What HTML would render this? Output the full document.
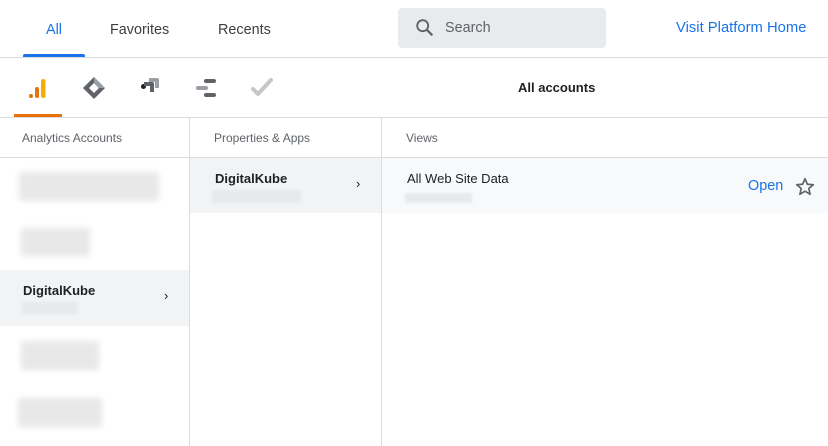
<!DOCTYPE html>
<html><head><style>
*{margin:0;padding:0;box-sizing:border-box}
body{width:828px;height:446px;background:#fff;font-family:"Liberation Sans",Arial,sans-serif;position:relative;overflow:hidden;color:#202124}
.a{position:absolute}
.hl{position:absolute;left:0;width:828px;height:1px;background:#dadce0}
.vl{position:absolute;width:1px;background:#dadce0}
.blur{position:absolute;background:#e8e8e8;filter:blur(3px)}
.bar{position:absolute;background:#e8e9eb;filter:blur(1px)}
.t{position:absolute;font-size:14.4px}
.h{position:absolute;font-size:12px;color:#5f6368}
</style></head><body>
<div class="t" style="left:46px;top:22px;color:#1a73e8">All</div>
<div class="a" style="left:23px;top:54px;width:62px;height:3px;background:#1a73e8;border-radius:2px 2px 0 0"></div>
<div class="t" style="left:110px;top:22px;color:#3c4043">Favorites</div>
<div class="t" style="left:218px;top:22px;color:#3c4043">Recents</div>
<div class="a" style="left:398px;top:8px;width:208px;height:40px;background:#e8eaed;border-radius:4px"></div>
<svg class="a" style="left:414px;top:17px" width="22" height="22" viewBox="0 0 24 24"><circle cx="9.5" cy="9.5" r="6" fill="none" stroke="#5f6368" stroke-width="2"/><path d="M14 14l6 6" stroke="#5f6368" stroke-width="2.4"/></svg>
<div class="t" style="left:445px;top:20px;color:#5f6368">Search</div>
<div class="t" style="left:676px;top:20px;color:#1a73e8;font-size:14.8px">Visit Platform Home</div>
<div class="hl" style="top:57px"></div>
<svg class="a" style="left:26px;top:76px" width="24" height="24" viewBox="0 0 24 24"><circle cx="5" cy="20" r="2" fill="#e37400"/><rect x="9" y="11" width="4" height="11" rx="2" fill="#e8710a"/><rect x="15" y="3" width="4.5" height="19" rx="2.2" fill="#f9ab00"/></svg>
<div class="a" style="left:14px;top:114px;width:48px;height:3px;background:#e8710a"></div>
<svg class="a" style="left:82px;top:76px" width="24" height="24" viewBox="0 0 24 24"><path d="M12 1L23 12 12 23 1 12Z" fill="#5f6368"/><path d="M12 7L17 12 12 17 7 12Z" fill="#fff"/><path d="M12 1L23 12 17.5 12 12 6.5Z" fill="#9aa0a6"/></svg>
<svg class="a" style="left:138px;top:76px" width="24" height="24" viewBox="0 0 24 24"><circle cx="5.5" cy="10.5" r="2.5" fill="#202124"/><path d="M6 8h8v8" fill="none" stroke="#5f6368" stroke-width="4" stroke-linejoin="round"/><path d="M11 4h8v8" fill="none" stroke="#9aa0a6" stroke-width="4" stroke-linejoin="round"/></svg>
<svg class="a" style="left:194px;top:76px" width="24" height="24" viewBox="0 0 24 24"><g stroke-linecap="round" stroke-width="4"><path d="M12 5h8" stroke="#5f6368"/><path d="M4 12h8" stroke="#9aa0a6"/><path d="M12 19h8" stroke="#5f6368"/></g></svg>
<svg class="a" style="left:250px;top:76px" width="24" height="24" viewBox="0 0 24 24"><path d="M3 13l5 5L21 4" fill="none" stroke="#c4c6c9" stroke-width="4" stroke-linecap="round" stroke-linejoin="round"/></svg>
<div class="t" style="left:518px;top:80px;font-weight:bold;font-size:13px">All accounts</div>
<div class="hl" style="top:117px"></div>
<div class="h" style="left:22px;top:131px">Analytics Accounts</div>
<div class="h" style="left:214px;top:131px">Properties &amp; Apps</div>
<div class="h" style="left:406px;top:131px">Views</div>
<div class="hl" style="top:157px"></div>
<div class="vl" style="left:189px;top:117px;height:329px"></div>
<div class="vl" style="left:381px;top:117px;height:329px"></div>
<div class="blur" style="left:19px;top:172px;width:140px;height:29px"></div>
<div class="blur" style="left:21px;top:228px;width:69px;height:28px"></div>
<div class="a" style="left:0;top:270px;width:189px;height:56px;background:#f1f3f4"></div>
<div class="t" style="left:23px;top:283px;font-weight:bold;font-size:13px">DigitalKube</div>
<div class="bar" style="left:22px;top:302px;width:56px;height:12px"></div>
<div class="t" style="left:164px;top:288px;font-size:13px">›</div>
<div class="blur" style="left:21px;top:341px;width:78px;height:29px"></div>
<div class="blur" style="left:18px;top:398px;width:84px;height:29px"></div>
<div class="a" style="left:190px;top:158px;width:191px;height:55px;background:#f1f3f4"></div>
<div class="t" style="left:215px;top:171px;font-weight:bold;font-size:13px">DigitalKube</div>
<div class="bar" style="left:212px;top:190px;width:89px;height:13px"></div>
<div class="t" style="left:356px;top:176px;font-size:13px">›</div>
<div class="a" style="left:382px;top:158px;width:446px;height:55px;background:#f8f9fa"></div>
<div class="t" style="left:407px;top:171px;font-size:13px">All Web Site Data</div>
<div class="bar" style="left:405px;top:193px;width:67px;height:10px"></div>
<div class="t" style="left:748px;top:178px;color:#1a73e8">Open</div>
<svg class="a" style="left:794px;top:176px" width="22" height="22" viewBox="0 0 24 24"><path d="M12 3l2.6 6 6.4.5-4.9 4.2 1.5 6.3L12 16.6 6.4 20l1.5-6.3L3 9.5l6.4-.5z" fill="none" stroke="#5f6368" stroke-width="1.8" stroke-linejoin="round"/></svg>
</body></html>
